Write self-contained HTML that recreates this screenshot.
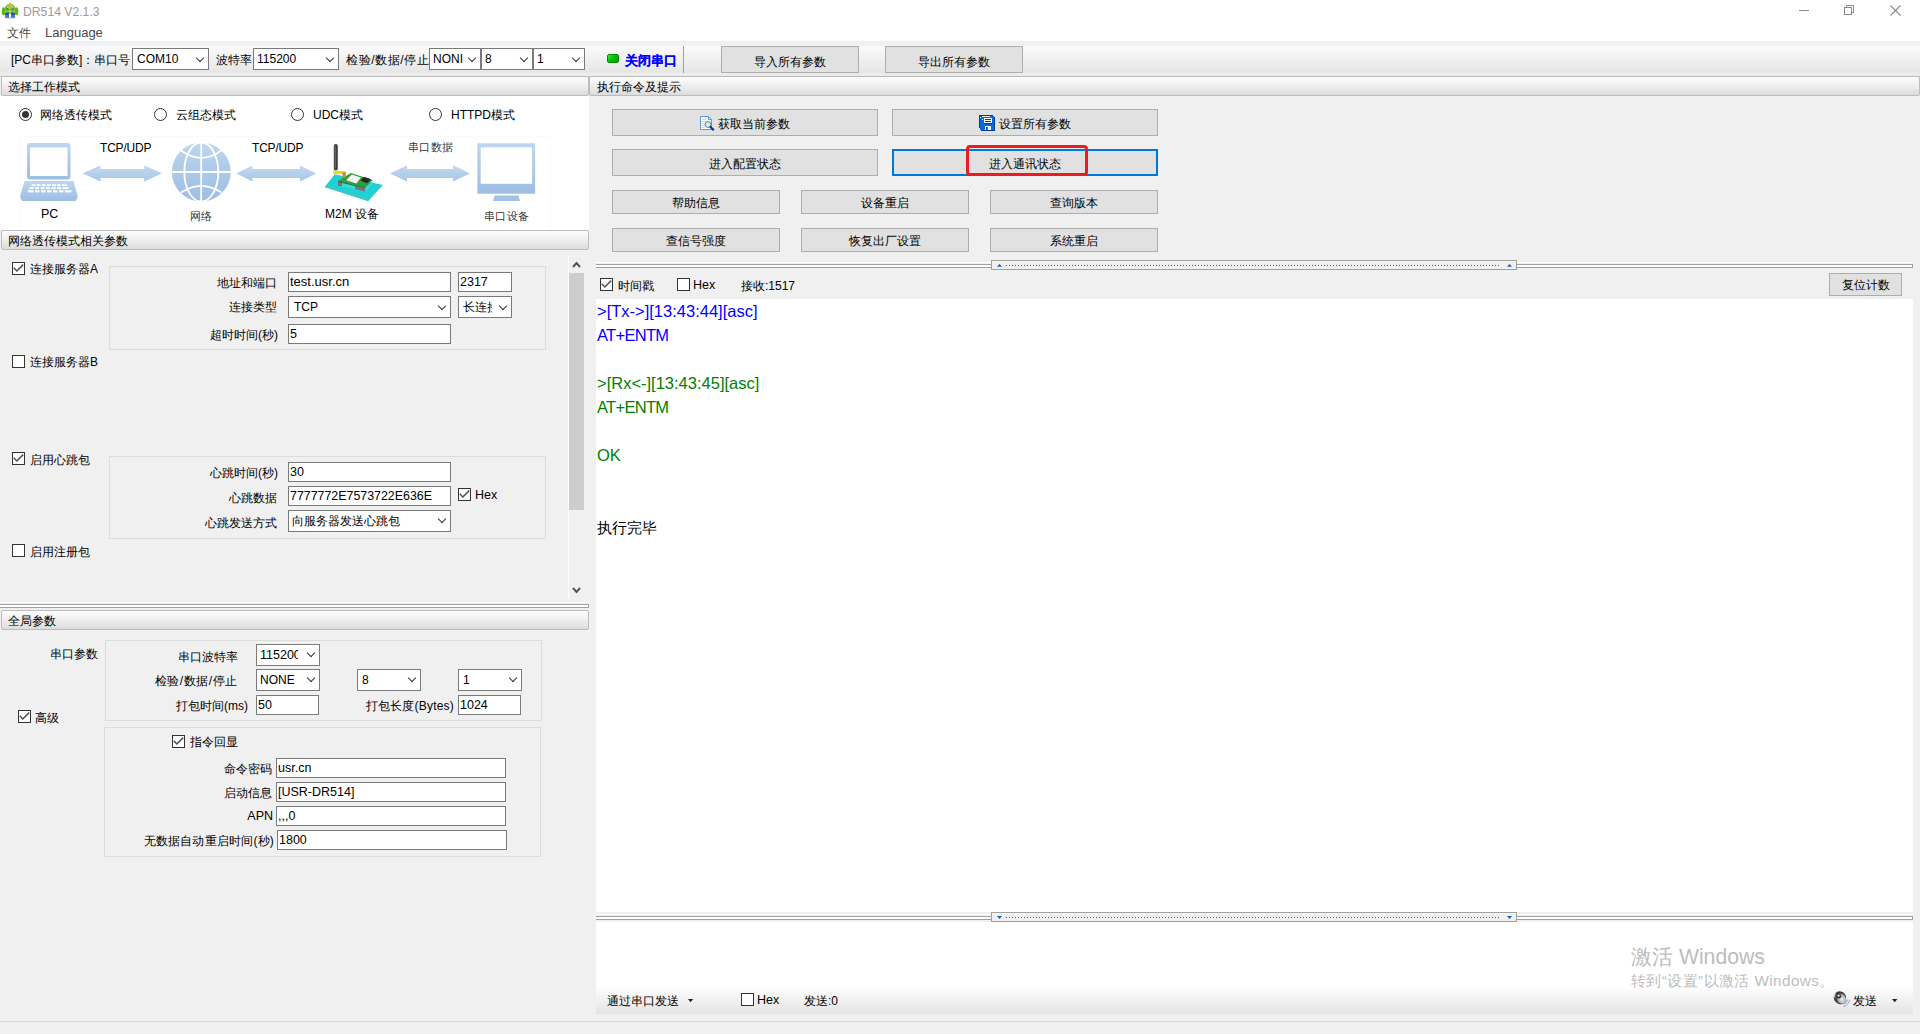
<!DOCTYPE html>
<html><head><meta charset="utf-8">
<style>
*{box-sizing:border-box}
html,body{margin:0;padding:0}
body{width:1920px;height:1034px;overflow:hidden;position:relative;background:#f0f0f0;font-family:"Liberation Sans",sans-serif;font-size:12px;line-height:20px;color:#000}
.a{position:absolute;white-space:nowrap}
.hdr{position:absolute;height:20px;border:1px solid #bcbcbc;border-radius:2px;background:linear-gradient(#fdfdfd,#f0f0f0 45%,#dcdcdc)}
.btn{position:absolute;background:#e1e1e1;border:1px solid #adadad;text-align:center}
.inp{position:absolute;background:#fff;border:1px solid #7a7a7a}
.cmb{position:absolute;background:#fff;border:1px solid #7a7a7a}
.grp{position:absolute;border:1px solid #dcdcdc}
.cb{position:absolute;width:13px;height:13px;border:1px solid #333;background:#fff}
.chev{position:absolute;width:6px;height:6px;border-right:1px solid #333;border-bottom:1px solid #333;transform:rotate(45deg)}
.rad{position:absolute;width:13px;height:13px;border:1px solid #333;border-radius:50%;background:#fff}
.r{text-align:right}
</style></head><body>
<!-- title + menu -->
<div class="a" style="left:0;top:0;width:1920px;height:41px;background:#fff"></div>
<div class="a" id="ttl" style="left:23px;top:2px;font-size:12.2px;color:#9a9a9a">DR514 V2.1.3</div>
<div class="a" style="left:7px;top:23px;color:#4a4a4a">文件</div>
<div class="a" style="left:45px;top:23px;font-size:13px;color:#4a4a4a">Language</div>

<!-- toolbar -->
<div class="a" style="left:0;top:41px;width:1920px;height:36px;background:linear-gradient(#f0f0f0 0,#f0f0f0 4px,#fbfbfb 5px,#e6e6e6 31px,#ececec 32px,#ececec 35px);border-bottom:1px solid #c8c8c8"></div>

<div class="a" style="left:11px;top:50px">[PC串口参数]：串口号</div>
<div class="cmb" style="left:132px;top:48px;width:77px;height:22px"></div>
<div class="a" style="left:137px;top:49px">COM10</div>
<div class="chev" style="left:197px;top:55px"></div>
<div class="a" style="left:216px;top:50px">波特率</div>
<div class="cmb" style="left:253px;top:48px;width:86px;height:22px"></div>
<div class="a" style="left:257px;top:49px">115200</div>
<div class="chev" style="left:327px;top:55px"></div>
<div class="a" style="left:346px;top:50px;letter-spacing:0.6px">检验/数据/停止</div>
<div class="cmb" style="left:429px;top:48px;width:52px;height:22px"></div>
<div class="a" style="left:433px;top:49px">NONI</div>
<div class="chev" style="left:469px;top:55px"></div>
<div class="cmb" style="left:481px;top:48px;width:52px;height:22px"></div>
<div class="a" style="left:485px;top:49px">8</div>
<div class="chev" style="left:521px;top:55px"></div>
<div class="cmb" style="left:533px;top:48px;width:52px;height:22px"></div>
<div class="a" style="left:537px;top:49px">1</div>
<div class="chev" style="left:573px;top:55px"></div>
<div class="a" style="left:607px;top:54px;width:12px;height:9px;background:linear-gradient(135deg,#3cf03c,#00c000 45%,#009a00);border:1px solid #008a00;border-radius:2px"></div>
<div class="a" style="left:625px;top:51px;color:#0000ff;font-weight:bold;font-size:12.5px;-webkit-text-stroke:0.15px #0000ff">关闭串口</div>
<div class="a" style="left:683px;top:46px;width:1px;height:27px;background:#a0a0a0"></div>
<div class="btn" style="left:721px;top:46px;width:138px;height:27px;line-height:30px">导入所有参数</div>
<div class="btn" style="left:885px;top:46px;width:138px;height:27px;line-height:30px">导出所有参数</div>

<!-- headers -->
<div class="hdr" style="left:1px;top:76px;width:588px"></div>
<div class="a" style="left:8px;top:77px">选择工作模式</div>
<div class="hdr" style="left:589px;top:76px;width:1331px"></div>
<div class="a" style="left:597px;top:77px">执行命令及提示</div>

<!-- left top white panel -->
<div class="a" style="left:0;top:96px;width:589px;height:134px;background:#fff"></div>

<div class="rad" style="left:19px;top:108px"></div><div class="a" style="left:22px;top:111px;width:7px;height:7px;border-radius:50%;background:#333"></div>
<div class="a" style="left:40px;top:105px">网络透传模式</div>
<div class="rad" style="left:154px;top:108px"></div>
<div class="a" style="left:176px;top:105px">云组态模式</div>
<div class="rad" style="left:291px;top:108px"></div>
<div class="a" style="left:313px;top:105px">UDC模式</div>
<div class="rad" style="left:429px;top:108px"></div>
<div class="a" style="left:451px;top:105px">HTTPD模式</div>

<!-- diagram -->
<svg class="a" style="left:0;top:130px" width="589" height="100" viewBox="0 130 589 100">
<defs>
<linearGradient id="bl" x1="0" y1="0" x2="0" y2="1"><stop offset="0" stop-color="#bed6f0"/><stop offset="1" stop-color="#9dbde2"/></linearGradient>
<linearGradient id="ar" x1="0" y1="0" x2="0" y2="1"><stop offset="0" stop-color="#c2d8f0"/><stop offset="1" stop-color="#a9c7e6"/></linearGradient>
</defs>
<rect x="20.5" y="136.5" width="530" height="94" fill="#fff" stroke="#fafafa" stroke-width="1"/>
<!-- laptop -->
<rect x="27" y="143" width="43.5" height="36.5" rx="3" fill="url(#bl)"/>
<rect x="30" y="147.5" width="37.5" height="28.5" fill="#fff"/>
<path d="M24.5 181 H73.5 L77.6 195.5 V198 L75.5 201 H22.5 L20.3 198 V195.5 Z" fill="url(#bl)"/>
<rect x="33" y="180" width="31" height="1" fill="#fff"/>
<g fill="#fff">
<rect x="31.5" y="184.3" width="4" height="1.8"/><rect x="36.6" y="184.3" width="4" height="1.8"/><rect x="41.7" y="184.3" width="4" height="1.8"/><rect x="46.8" y="184.3" width="4" height="1.8"/><rect x="51.9" y="184.3" width="4" height="1.8"/><rect x="57" y="184.3" width="4" height="1.8"/><rect x="62.1" y="184.3" width="5" height="1.8"/>
<rect x="29.5" y="187.2" width="4.2" height="1.9"/><rect x="35" y="187.2" width="4.2" height="1.9"/><rect x="40.5" y="187.2" width="4.2" height="1.9"/><rect x="46" y="187.2" width="4.2" height="1.9"/><rect x="51.5" y="187.2" width="4.2" height="1.9"/><rect x="57" y="187.2" width="4.2" height="1.9"/><rect x="62.5" y="187.2" width="6" height="1.9"/>
<rect x="28" y="190.3" width="5.5" height="2.1"/><rect x="35" y="190.3" width="4.5" height="2.1"/><rect x="41" y="190.3" width="4.5" height="2.1"/><rect x="47" y="190.3" width="4.5" height="2.1"/><rect x="53" y="190.3" width="4.5" height="2.1"/><rect x="59" y="190.3" width="4.5" height="2.1"/><rect x="65" y="190.3" width="6.5" height="2.1"/>
</g>
<!-- arrows -->
<path d="M82.3 173.3 L100.5 165.4 V169 H144.3 V165.4 L162 173.3 L144.3 181.6 V177.9 H100.5 V181.6 Z" fill="url(#ar)"/>
<path d="M236.3 173.4 L252.5 165.4 V169 H300 V165.4 L316.3 173.4 L300 181.6 V177.9 H252.5 V181.6 Z" fill="url(#ar)"/>
<path d="M390 173.4 L407 165.2 V169 H453.1 V165.2 L470 173.4 L453.1 181.6 V177.9 H407 V181.6 Z" fill="url(#ar)"/>
<!-- globe -->
<circle cx="201.3" cy="172" r="29.5" fill="url(#bl)"/>
<g stroke="#fff" stroke-width="1.8" fill="none">
<line x1="201.2" y1="142" x2="201.2" y2="202"/>
<line x1="171.5" y1="172" x2="231.5" y2="172"/>
<ellipse cx="201.3" cy="172" rx="17" ry="29.5"/>
<path d="M181 150.5 Q201.3 165.1 221.5 150.5"/>
<path d="M181 192.5 Q201.3 179.1 221.5 192.5"/>
</g>
<!-- m2m device -->
<path d="M325 186.5 L334.8 174.3 L383 185 L368.7 200.4 Z" fill="#22cfd2"/>
<path d="M325 186.5 L368.7 200.4 L368.5 201.2 L325 187.3 Z" fill="#17a9ac"/>
<path d="M338 186 L338 181 L365.5 188 L372.5 181.5 L372.5 184 L365.5 191 Z" fill="#3fd8da"/>
<path d="M338 181 L342 181.8 L342 186.5 L338 185.8 Z" fill="#7c6f80"/>
<path d="M355 186 L365 188.5 L365 191.5 L355 189 Z" fill="#7c6f80"/>
<path d="M338 181 L350.8 173 L372.8 180 L365.3 187.5 Z" fill="#2f9d3a"/>
<path d="M338 181 L365.3 187.5 L365.3 188.5 L338 182 Z" fill="#1f6f28"/>
<path d="M346.1 180.3 L351.8 174.6 L360.9 177.4 L356.5 183.4 Z" fill="#f4f4f4"/>
<path d="M360.3 180.6 L364 176.8 L371 179.2 L367 183.2 Z" fill="#262626"/>
<rect x="333.8" y="144.1" width="4" height="26.5" rx="2" fill="#3d3d3d"/>
<rect x="334.6" y="145.5" width="1.2" height="23" fill="#6a6a6a"/>
<path d="M332.9 170.2 L345.8 171.5 L345.8 174.3 L333.5 174 Z" fill="#e8dc28"/>
<rect x="342.6" y="172" width="3.2" height="5.7" fill="#d28a2a"/>
</svg>
<div class="a" style="left:100px;top:137.5px;font-size:12px;letter-spacing:-0.2px">TCP/UDP</div>
<div class="a" style="left:252px;top:137.5px;font-size:12px;letter-spacing:-0.2px">TCP/UDP</div>
<div class="a" style="left:41px;top:204px;font-size:12.5px">PC</div>
<div class="a" style="left:325px;top:204px;font-size:12px">M2M 设备</div>
<div class="a" style="left:190px;top:206px;font-size:11px;font-family:'Liberation Serif',serif;color:#333">网络</div>
<div class="a" style="left:408px;top:137px;font-size:11px;font-family:'Liberation Serif',serif;color:#333;letter-spacing:0.4px">串口数据</div>
<div class="a" style="left:484px;top:206px;font-size:11px;font-family:'Liberation Serif',serif;color:#333;letter-spacing:0.4px">串口设备</div>
<svg class="a" style="left:470px;top:140px" width="70" height="65" viewBox="470 140 70 65">
<rect x="477.4" y="143.3" width="57.7" height="50.4" fill="url(#bl)"/>
<rect x="480.7" y="147.3" width="51.4" height="36.5" fill="#fff"/>
<path d="M494.5 195.4 H518.5 L520 201 H493 Z" fill="#a3c2e4"/>
</svg>

<div class="hdr" style="left:1px;top:230px;width:588px"></div>
<div class="a" style="left:8px;top:231px">网络透传模式相关参数</div>

<!-- scroll panel -->
<div class="cb" style="left:12px;top:262px"></div><svg class="a" style="left:12px;top:262px" width="13" height="13"><path d="M1.8 5.8 L4.8 9 L11.2 2.6" stroke="#505050" stroke-width="1.5" fill="none"/></svg>
<div class="a" style="left:30px;top:259px">连接服务器A</div>
<div class="grp" style="left:109px;top:266px;width:437px;height:84px"></div>
<div class="a r" style="left:150px;width:127px;top:273px">地址和端口</div>
<div class="inp" style="left:288px;top:272px;width:163px;height:20px"></div>
<div class="a" style="left:290px;top:272px;font-size:13px">test.usr.cn</div>
<div class="inp" style="left:458px;top:272px;width:54px;height:20px"></div>
<div class="a" style="left:460px;top:272px;font-size:12.5px">2317</div>
<div class="a r" style="left:150px;width:127px;top:297px">连接类型</div>
<div class="cmb" style="left:288px;top:296px;width:163px;height:22px"></div>
<div class="a" style="left:294px;top:297px">TCP</div>
<div class="chev" style="left:439px;top:303px"></div>
<div class="cmb" style="left:458px;top:296px;width:54px;height:22px"></div>
<div class="a" style="left:463px;top:297px;width:29px;overflow:hidden">长连接</div>
<div class="chev" style="left:500px;top:303px"></div>
<div class="a r" style="left:150px;width:128px;top:325px">超时时间(秒)</div>
<div class="inp" style="left:288px;top:324px;width:163px;height:20px"></div>
<div class="a" style="left:290px;top:324px;font-size:12.5px">5</div>

<div class="cb" style="left:12px;top:355px"></div>
<div class="a" style="left:30px;top:352px">连接服务器B</div>

<div class="cb" style="left:12px;top:452px"></div><svg class="a" style="left:12px;top:452px" width="13" height="13"><path d="M1.8 5.8 L4.8 9 L11.2 2.6" stroke="#505050" stroke-width="1.5" fill="none"/></svg>
<div class="a" style="left:30px;top:450px">启用心跳包</div>
<div class="grp" style="left:109px;top:456px;width:437px;height:83px"></div>
<div class="a r" style="left:150px;width:128px;top:463px">心跳时间(秒)</div>
<div class="inp" style="left:288px;top:462px;width:163px;height:20px"></div>
<div class="a" style="left:290px;top:462px;font-size:12.5px">30</div>
<div class="a r" style="left:150px;width:127px;top:488px">心跳数据</div>
<div class="inp" style="left:288px;top:486px;width:163px;height:20px"></div>
<div class="a" style="left:290px;top:486px;font-size:12.4px">7777772E7573722E636E</div>
<div class="cb" style="left:458px;top:488px"></div><svg class="a" style="left:458px;top:488px" width="13" height="13"><path d="M1.8 5.8 L4.8 9 L11.2 2.6" stroke="#505050" stroke-width="1.5" fill="none"/></svg>
<div class="a" style="left:475px;top:485px;font-size:12.5px">Hex</div>
<div class="a r" style="left:150px;width:127px;top:513px">心跳发送方式</div>
<div class="cmb" style="left:288px;top:510px;width:163px;height:22px"></div>
<div class="a" style="left:292px;top:511px">向服务器发送心跳包</div>
<div class="chev" style="left:439px;top:516px"></div>

<div class="cb" style="left:12px;top:544px"></div>
<div class="a" style="left:30px;top:542px">启用注册包</div>

<!-- scrollbar -->
<div class="a" style="left:568px;top:256px;width:1px;height:342px;background:#fff"></div>
<div class="a" style="left:569px;top:273px;width:15px;height:237px;background:#cdcdcd"></div>
<svg class="a" style="left:569px;top:258px" width="15" height="12"><path d="M4 9 L7.5 5 L11 9" stroke="#555" stroke-width="2" fill="none"/></svg>
<svg class="a" style="left:569px;top:584px" width="15" height="12"><path d="M4 4 L7.5 8 L11 4" stroke="#555" stroke-width="2" fill="none"/></svg>

<!-- splitter left -->
<div class="a" style="left:0;top:602px;width:589px;height:7px;border-top:1px solid #fff"></div>
<div class="a" style="left:0;top:604px;width:589px;height:4px;border-top:1px solid #a0a0a0;border-bottom:1px solid #a0a0a0;border-right:1px solid #a0a0a0;background:#fff"></div>

<div class="hdr" style="left:1px;top:610px;width:588px"></div>
<div class="a" style="left:8px;top:611px">全局参数</div>

<!-- global params -->
<div class="a" style="left:50px;top:644px">串口参数</div>
<div class="grp" style="left:105px;top:640px;width:437px;height:81px"></div>
<div class="a r" style="left:120px;width:118px;top:647px">串口波特率</div>
<div class="cmb" style="left:256px;top:644px;width:64px;height:22px"></div>
<div class="a" style="left:260px;top:645px;width:38px;overflow:hidden;font-size:12.5px">115200</div>
<div class="chev" style="left:308px;top:650px"></div>
<div class="a r" style="left:120px;width:118px;top:671px;letter-spacing:0.6px">检验/数据/停止</div>
<div class="cmb" style="left:256px;top:669px;width:64px;height:22px"></div>
<div class="a" style="left:260px;top:670px">NONE</div>
<div class="chev" style="left:308px;top:675px"></div>
<div class="cmb" style="left:357px;top:669px;width:64px;height:22px"></div>
<div class="a" style="left:362px;top:670px">8</div>
<div class="chev" style="left:409px;top:675px"></div>
<div class="cmb" style="left:458px;top:669px;width:64px;height:22px"></div>
<div class="a" style="left:463px;top:670px">1</div>
<div class="chev" style="left:510px;top:675px"></div>
<div class="a r" style="left:120px;width:128px;top:696px">打包时间(ms)</div>
<div class="inp" style="left:256px;top:695px;width:63px;height:20px"></div>
<div class="a" style="left:258px;top:695px;font-size:12.5px">50</div>
<div class="a r" style="left:330px;width:124px;top:696px;letter-spacing:0.2px">打包长度(Bytes)</div>
<div class="inp" style="left:458px;top:695px;width:63px;height:20px"></div>
<div class="a" style="left:460px;top:695px;font-size:12.5px">1024</div>

<div class="cb" style="left:18px;top:710px"></div><svg class="a" style="left:18px;top:710px" width="13" height="13"><path d="M1.8 5.8 L4.8 9 L11.2 2.6" stroke="#505050" stroke-width="1.5" fill="none"/></svg>
<div class="a" style="left:35px;top:708px">高级</div>
<div class="grp" style="left:104px;top:727px;width:437px;height:130px"></div>
<div class="cb" style="left:172px;top:735px"></div><svg class="a" style="left:172px;top:735px" width="13" height="13"><path d="M1.8 5.8 L4.8 9 L11.2 2.6" stroke="#505050" stroke-width="1.5" fill="none"/></svg>
<div class="a" style="left:190px;top:732px">指令回显</div>
<div class="a r" style="left:120px;width:152px;top:759px">命令密码</div>
<div class="inp" style="left:276px;top:758px;width:230px;height:20px"></div>
<div class="a" style="left:278px;top:758px;font-size:12.5px">usr.cn</div>
<div class="a r" style="left:120px;width:152px;top:783px">启动信息</div>
<div class="inp" style="left:276px;top:782px;width:230px;height:20px"></div>
<div class="a" style="left:278px;top:782px;font-size:12.5px">[USR-DR514]</div>
<div class="a r" style="left:120px;width:153px;top:806px;font-size:12.5px">APN</div>
<div class="inp" style="left:276px;top:806px;width:230px;height:20px"></div>
<div class="a" style="left:278px;top:806px;font-size:12.5px">,,,0</div>
<div class="a r" style="left:100px;width:174px;top:831px;letter-spacing:0.2px">无数据自动重启时间(秒)</div>
<div class="inp" style="left:277px;top:830px;width:230px;height:20px"></div>
<div class="a" style="left:279px;top:830px;font-size:12.5px">1800</div>

<!-- right text areas -->
<div class="a" style="left:596px;top:299px;width:1317px;height:613px;background:#fff"></div>
<div class="a" style="left:596px;top:922px;width:1317px;height:92px;background:linear-gradient(#fff 0,#fff 64px,#e3e3e3 92px)"></div>

<!-- right buttons -->
<div class="btn" style="left:612px;top:109px;width:266px;height:27px"></div>
<svg class="a" style="left:699px;top:115px" width="17" height="17" viewBox="0 0 17 17">
<path d="M1.5 1.5 H9.5 L12.5 4.5 V14.5 H1.5 Z" fill="#fff" stroke="#5b9bd5" stroke-width="1"/>
<path d="M9.5 1.5 V4.5 H12.5" fill="none" stroke="#5b9bd5" stroke-width="1"/>
<g stroke="#d0d0d0" stroke-width="0.8"><line x1="3" y1="4.5" x2="7" y2="4.5"/><line x1="3" y1="6.5" x2="7" y2="6.5"/><line x1="3" y1="8.5" x2="6" y2="8.5"/><line x1="3" y1="10.5" x2="6" y2="10.5"/><line x1="3" y1="12.5" x2="6" y2="12.5"/></g>
<circle cx="9" cy="9.5" r="2.9" fill="#c4f8fa" stroke="#777" stroke-width="1"/>
<path d="M11 11.5 L14.8 15.3" stroke="#0a2aa8" stroke-width="2.2"/>
</svg>
<div class="a" style="left:718px;top:114px">获取当前参数</div>
<div class="btn" style="left:892px;top:109px;width:266px;height:27px"></div>
<svg class="a" style="left:974px;top:110px" width="30" height="24" viewBox="974 110 30 24" shape-rendering="crispEdges">
<rect x="981" y="117" width="14" height="14" fill="#0038a8"/>
<rect x="979" y="115" width="14" height="13" fill="#0038a8"/>
<rect x="980" y="116" width="14" height="14" fill="#0a6ad6"/>
<rect x="982" y="116" width="8" height="1" fill="#fff"/>
<rect x="980" y="117" width="1" height="1" fill="#fff"/><rect x="982" y="119" width="1" height="1" fill="#fff"/>
<rect x="984" y="118" width="8" height="5" fill="#fff"/>
<rect x="985" y="119" width="6" height="1" fill="#0038a8"/><rect x="985" y="121" width="6" height="1" fill="#0038a8"/>
<rect x="984" y="123" width="8" height="1" fill="#0038a8"/>
<rect x="985" y="126" width="6" height="4" fill="#fff"/>
<rect x="986" y="127" width="2" height="3" fill="#0a6ad6"/>
<rect x="981" y="130" width="14" height="1" fill="#0038a8"/>
<rect x="994" y="117" width="1" height="14" fill="#0038a8"/>
</svg>
<div class="a" style="left:999px;top:114px">设置所有参数</div>
<div class="btn" style="left:612px;top:149px;width:266px;height:27px;line-height:29px">进入配置状态</div>
<div class="btn" style="left:892px;top:149px;width:266px;height:27px;border:2px solid #0078d7;line-height:27px">进入通讯状态</div>
<div class="a" style="left:966px;top:145px;width:122px;height:31px;border:3px solid #ea1c1c;border-radius:4px"></div>
<div class="btn" style="left:612px;top:190px;width:168px;height:24px;line-height:25px">帮助信息</div>
<div class="btn" style="left:801px;top:190px;width:168px;height:24px;line-height:25px">设备重启</div>
<div class="btn" style="left:990px;top:190px;width:168px;height:24px;line-height:25px">查询版本</div>
<div class="btn" style="left:612px;top:228px;width:168px;height:24px;line-height:25px">查信号强度</div>
<div class="btn" style="left:801px;top:228px;width:168px;height:24px;line-height:25px">恢复出厂设置</div>
<div class="btn" style="left:990px;top:228px;width:168px;height:24px;line-height:25px">系统重启</div>

<!-- splitter 1 -->
<div class="a" style="left:596px;top:262px;width:1317px;height:1px;background:#fff"></div>
<div class="a" style="left:596px;top:264px;width:1317px;height:4px;border-top:1px solid #a0a0a0;border-bottom:1px solid #a0a0a0;border-right:1px solid #a0a0a0;background:#fff"></div>
<div class="a" style="left:991px;top:260px;width:526px;height:10px;border:1px solid #a0a0a0;background:#f0f0f0;border-top-color:#a0a0a0"></div>
<div class="a" style="left:992px;top:261px;width:524px;height:1px;background:#f8f8f8"></div>
<svg class="a" style="left:991px;top:260px" width="526" height="10"><path d="M6 6.8 L8.5 3.9 L11 6.8 Z" fill="#0066cc"/><line x1="15" y1="5.5" x2="510" y2="5.5" stroke="#0078d7" stroke-width="1" stroke-dasharray="1 2"/><path d="M516 6.8 L518.5 3.9 L521 6.8 Z" fill="#0066cc"/></svg>

<!-- recv toolbar -->
<div class="cb" style="left:600px;top:278px"></div><svg class="a" style="left:600px;top:278px" width="13" height="13"><path d="M1.8 5.8 L4.8 9 L11.2 2.6" stroke="#505050" stroke-width="1.5" fill="none"/></svg>
<div class="a" style="left:618px;top:276px">时间戳</div>
<div class="cb" style="left:677px;top:278px"></div>
<div class="a" style="left:693px;top:275px;font-size:12.5px">Hex</div>
<div class="a" style="left:741px;top:276px">接收:1517</div>
<div class="btn" style="left:1829px;top:273px;width:73px;height:23px;line-height:22px">复位计数</div>

<!-- log -->
<div class="a" style="left:597px;top:299px;font-size:16.5px;line-height:24px;white-space:pre"><span style="color:#0000ff">&gt;[Tx-&gt;][13:43:44][asc]
<span style="letter-spacing:-0.7px">AT+ENTM</span>
</span>
<span style="color:#008000">&gt;[Rx&lt;-][13:43:45][asc]
<span style="letter-spacing:-0.7px">AT+ENTM</span>

OK


</span><span style="font-size:14.5px">执行完毕</span></div>

<!-- splitter 2 -->
<div class="a" style="left:596px;top:912px;width:1317px;height:10px;background:#f0f0f0"></div>
<div class="a" style="left:596px;top:914px;width:1317px;height:1px;background:#fff"></div>
<div class="a" style="left:596px;top:916px;width:1317px;height:4px;border-top:1px solid #a0a0a0;border-bottom:1px solid #a0a0a0;border-right:1px solid #a0a0a0;background:#fff"></div>
<div class="a" style="left:991px;top:912px;width:526px;height:10px;border:1px solid #a0a0a0;background:#f0f0f0"></div>
<div class="a" style="left:992px;top:913px;width:524px;height:1px;background:#f8f8f8"></div>
<svg class="a" style="left:991px;top:912px" width="526" height="10"><path d="M6 4 H11 L8.5 7 Z" fill="#0066cc"/><line x1="15" y1="5.5" x2="510" y2="5.5" stroke="#0078d7" stroke-width="1" stroke-dasharray="1 2"/><path d="M516 4 H521 L518.5 7 Z" fill="#0066cc"/></svg>

<!-- send toolbar -->
<div class="a" style="left:607px;top:991px">通过串口发送</div>
<svg class="a" style="left:686px;top:996px" width="9" height="9"><path d="M2 3 H7.2 L4.6 6.2 Z" fill="#222"/></svg>
<div class="cb" style="left:741px;top:993px"></div>
<div class="a" style="left:757px;top:990px;font-size:12.5px">Hex</div>
<div class="a" style="left:804px;top:991px">发送:0</div>
<div class="a" style="left:1631px;top:942px;font-size:21.2px;line-height:30px;color:#bdbdbd">激活 Windows</div>
<div class="a" style="left:1631px;top:971px;font-size:15.3px;line-height:20px;color:#bdbdbd;letter-spacing:0.4px">转到“设置”以激活 Windows。</div>
<svg class="a" style="left:1828px;top:986px" width="28" height="24" viewBox="1828 986 28 24">
<defs><radialGradient id="sp" cx="0.55" cy="0.6" r="0.6"><stop offset="0" stop-color="#f0f0f0"/><stop offset="0.6" stop-color="#b8b8b8"/><stop offset="1" stop-color="#6a6a6a"/></radialGradient></defs>
<ellipse cx="1840" cy="997.7" rx="6.1" ry="6.6" transform="rotate(-25 1840 997.7)" fill="#3c3c3c"/>
<ellipse cx="1841.2" cy="998.6" rx="4.6" ry="5.3" transform="rotate(-25 1841.2 998.6)" fill="url(#sp)"/>
<circle cx="1838.8" cy="996.3" r="2.3" fill="#2e2e2e"/>
<circle cx="1838.6" cy="995.7" r="1.1" fill="#f4f4f4"/>
<path d="M1835.2 993.5 Q1834.3 995.5 1835 997.5" stroke="#f2f2f2" stroke-width="1.1" fill="none"/>
<path d="M1843.3 1004.3 Q1846.5 1003.5 1847.6 999.5" stroke="#8c88f2" stroke-width="1" fill="none"/>
<path d="M1843.3 1006.5 Q1848.5 1005.5 1849.6 999.8" stroke="#9a96f4" stroke-width="1" fill="none"/>
</svg>
<div class="a" style="left:1853px;top:991px">发送</div>
<svg class="a" style="left:1890px;top:996px" width="9" height="9"><path d="M2 3 H7.4 L4.7 6.3 Z" fill="#222"/></svg>

<!-- window controls -->
<svg class="a" style="left:1790px;top:0" width="130" height="22">
<line x1="9" y1="10.5" x2="19" y2="10.5" stroke="#8a8a8a" stroke-width="1"/>
<rect x="54.5" y="7.5" width="7" height="7" fill="none" stroke="#8a8a8a" stroke-width="1"/>
<path d="M56.5 7.5 V5.5 H63.5 V12.5 H61.5" fill="none" stroke="#8a8a8a" stroke-width="1"/>
<path d="M100.5 5.5 L110.5 15.5 M110.5 5.5 L100.5 15.5" stroke="#8a8a8a" stroke-width="1.1"/>
</svg>
<!-- app icon -->
<svg class="a" style="left:0;top:0" width="22" height="22" viewBox="0 0 22 22">
<ellipse cx="10" cy="17.8" rx="6" ry="0.9" fill="#d8d8d8"/>
<ellipse cx="3.6" cy="11.3" rx="1.9" ry="4" fill="#58b814"/>
<ellipse cx="16.4" cy="11.3" rx="1.9" ry="4" fill="#58b814"/>
<ellipse cx="10.1" cy="8.6" rx="5.3" ry="4.9" fill="#78c81a"/>
<ellipse cx="10.1" cy="6.5" rx="3.5" ry="2.3" fill="#96d84a"/>
<rect x="9" y="2.8" width="2" height="5" rx="1" fill="#f0a640"/>
<circle cx="7.4" cy="9.1" r="1.1" fill="#6a62c8"/><circle cx="12.6" cy="9.1" r="1.1" fill="#6a62c8"/>
<ellipse cx="10" cy="11.5" rx="1.3" ry="0.6" fill="#e8e4f0"/>
<path d="M5.2 12.4 H8.9 V17.6 H5.2 Z" fill="#1c4f9c"/>
<path d="M11.1 12.4 H14.9 V17.6 H11.1 Z" fill="#1c4f9c"/>
<rect x="5.6" y="15" width="3" height="2.4" fill="#3a86c8"/>
<rect x="11.5" y="15" width="3" height="2.4" fill="#3a86c8"/>
<rect x="9.3" y="12.3" width="1.5" height="2" fill="#c8a020"/>
</svg>

<!-- status line -->
<div class="a" style="left:0;top:1021px;width:1920px;height:1px;background:#d9d9d9"></div>
</body></html>
